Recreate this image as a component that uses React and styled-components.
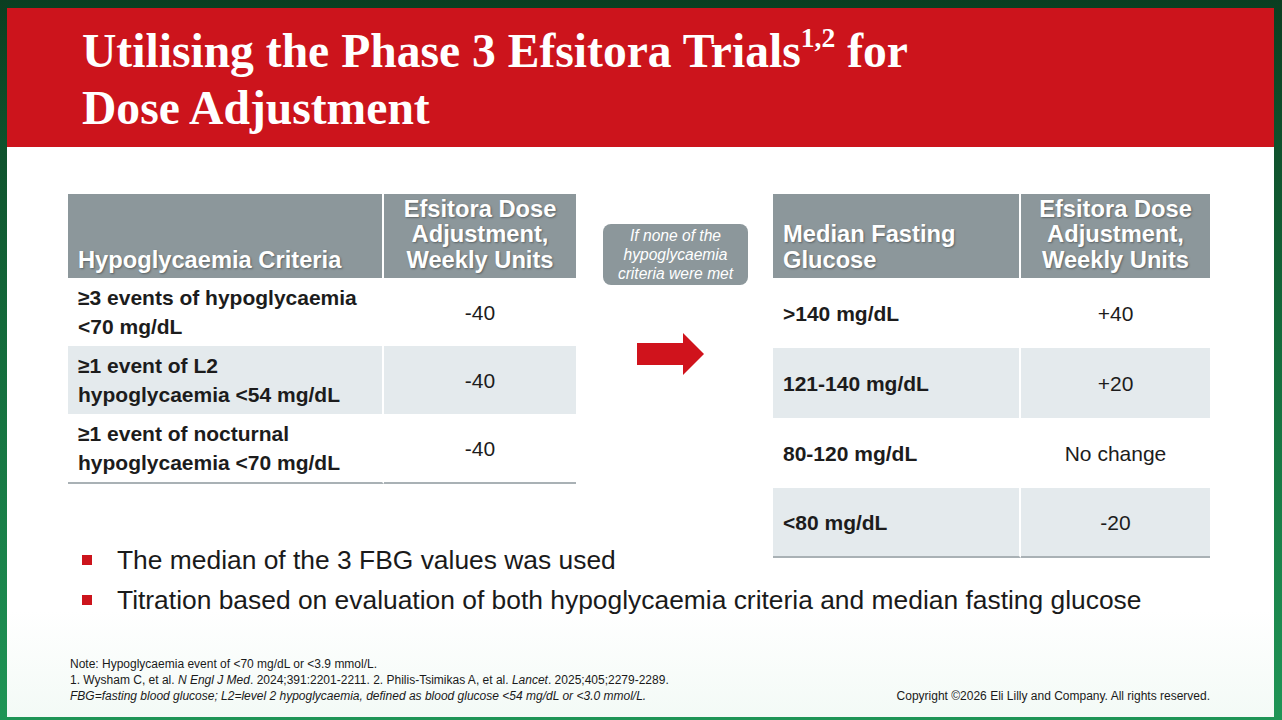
import styled, { createGlobalStyle } from 'styled-components';

const GlobalStyle = createGlobalStyle`
  html, body {
    margin: 0;
    padding: 0;
  }
  body {
    width: 1282px;
    height: 720px;
    overflow: hidden;
    background: linear-gradient(180deg, #0b3e21 0%, #13693a 45%, #1f9556 100%);
    font-family: "Liberation Sans", Arial, sans-serif;
  }
`;

const Frame = styled.div`
  display: flex;
  padding: 8px 8px 3px 7px;
  height: 720px;
  box-sizing: border-box;
`;

const Slide = styled.div`
  flex: 1;
  display: flex;
  flex-direction: column;
  background: linear-gradient(180deg, #ffffff 0%, #ffffff 85%, #f3faf6 100%);
`;

const TitleBar = styled.header`
  height: 139px;
  box-sizing: border-box;
  background: #cc141c;
  padding: 15px 0 0 75px;
`;

const Title = styled.h1`
  margin: 0;
  font-family: "Liberation Serif", "Times New Roman", serif;
  font-weight: 700;
  font-size: 47.6px;
  line-height: 57px;
  color: #ffffff;
`;

const Sup = styled.sup`
  font-size: 0.58em;
  line-height: 0;
  vertical-align: 0.72em;
`;

const Body = styled.main`
  flex: 1;
  display: flex;
  flex-direction: column;
  padding: 47px 64px 13px 61px;
`;

const TablesRow = styled.div`
  display: flex;
  align-items: flex-start;
`;

const Table = styled.table`
  width: ${(p) => p.width}px;
  table-layout: fixed;
  border-collapse: separate;
  border-spacing: 0;
  flex: none;
`;

const HeadCell = styled.th`
  height: 84px;
  box-sizing: border-box;
  padding: 0 10px 5px;
  background: #8c979b;
  color: #ffffff;
  font-size: 23.7px;
  font-weight: 700;
  line-height: 25.5px;
  text-align: ${(p) => (p.center ? 'center' : 'left')};
  vertical-align: bottom;
  text-shadow: 1px 1px 2px rgba(0, 0, 0, 0.35);
  border-right: ${(p) => (p.divider ? '2px solid #ffffff' : 'none')};
`;

const Row = styled.tr`
  background: ${(p) => (p.shade ? '#e4eaed' : '#ffffff')};
`;

const Cell = styled.td`
  height: ${(p) => p.h}px;
  box-sizing: border-box;
  padding: 0 10px;
  font-size: 21px;
  line-height: 29px;
  font-weight: ${(p) => (p.bold ? 700 : 400)};
  color: #1c1c1c;
  text-align: ${(p) => (p.center ? 'center' : 'left')};
  vertical-align: middle;
  border-right: ${(p) => (p.divider ? '2px solid #ffffff' : 'none')};
  border-bottom: ${(p) => (p.last ? '2px solid #a9b1b5' : 'none')};
`;

const Middle = styled.div`
  width: 197px;
  flex: none;
  display: flex;
  flex-direction: column;
  align-items: center;
  padding-top: 30px;
  gap: 48px;
`;

const Pill = styled.div`
  width: 145px;
  height: 61px;
  box-sizing: border-box;
  display: flex;
  align-items: center;
  justify-content: center;
  border-radius: 8px;
  background: #8c979b;
  color: #ffffff;
  font-style: italic;
  font-size: 15.6px;
  line-height: 19px;
  text-align: center;
  margin-left: 2px;
`;

const Arrow = styled.svg`
  display: block;
  margin-right: 8px;
`;

const Bullets = styled.ul`
  list-style: none;
  margin: -18px 0 0 14px;
  padding: 0;
`;

const Bullet = styled.li`
  display: flex;
  align-items: center;
  gap: 25px;
  font-size: 26.4px;
  line-height: 40px;
  color: #1a1a1a;

  &::before {
    content: '';
    width: 10px;
    height: 10px;
    flex: none;
    background: #cc141c;
  }
`;

const Footer = styled.footer`
  margin-top: auto;
  display: flex;
  align-items: flex-end;
  justify-content: space-between;
  font-size: 12px;
  line-height: 16px;
  color: #1a1a1a;
`;

const Notes = styled.div`
  margin-left: 2px;
`;

const NoteLine = styled.div`
  font-style: ${(p) => (p.italic ? 'italic' : 'normal')};
`;

const Copyright = styled.div``;

const hypoRows = [
  ['≥3 events of hypoglycaemia', '<70 mg/dL', '-40'],
  ['≥1 event of L2', 'hypoglycaemia <54 mg/dL', '-40'],
  ['≥1 event of nocturnal', 'hypoglycaemia <70 mg/dL', '-40'],
];

const fbgRows = [
  ['>140 mg/dL', '+40'],
  ['121-140 mg/dL', '+20'],
  ['80-120 mg/dL', 'No change'],
  ['<80 mg/dL', '-20'],
];

function DoseHead() {
  return (
    <HeadCell center>
      Efsitora Dose
      <br />
      Adjustment,
      <br />
      Weekly Units
    </HeadCell>
  );
}

export default function App() {
  return (
    <>
      <GlobalStyle />
      <Frame>
        <Slide>
          <TitleBar>
            <Title>
              Utilising the Phase 3 Efsitora Trials<Sup>1,2</Sup> for
              <br />
              Dose Adjustment
            </Title>
          </TitleBar>
          <Body>
            <TablesRow>
              <Table width={508}>
                <colgroup>
                  <col style={{ width: 316 }} />
                  <col style={{ width: 192 }} />
                </colgroup>
                <thead>
                  <tr>
                    <HeadCell divider>Hypoglycaemia Criteria</HeadCell>
                    <DoseHead />
                  </tr>
                </thead>
                <tbody>
                  {hypoRows.map(([a, b, v], i) => {
                    const last = i === hypoRows.length - 1;
                    return (
                      <Row key={a} shade={i % 2 === 1}>
                        <Cell h={last ? 70 : 68} bold divider last={last}>
                          {a}
                          <br />
                          {b}
                        </Cell>
                        <Cell h={last ? 70 : 68} center last={last}>
                          {v}
                        </Cell>
                      </Row>
                    );
                  })}
                </tbody>
              </Table>

              <Middle>
                <Pill>
                  If none of the
                  <br />
                  hypoglycaemia
                  <br />
                  criteria were met
                </Pill>
                <Arrow width="67" height="42" viewBox="0 0 67 42">
                  <polygon points="0,10 46,10 46,0 67,21 46,42 46,32 0,32" fill="#d0131c" />
                </Arrow>
              </Middle>

              <Table width={437}>
                <colgroup>
                  <col style={{ width: 248 }} />
                  <col style={{ width: 189 }} />
                </colgroup>
                <thead>
                  <tr>
                    <HeadCell divider>
                      Median Fasting
                      <br />
                      Glucose
                    </HeadCell>
                    <DoseHead />
                  </tr>
                </thead>
                <tbody>
                  {fbgRows.map(([a, v], i) => {
                    const last = i === fbgRows.length - 1;
                    return (
                      <Row key={a} shade={i % 2 === 1}>
                        <Cell h={70} bold divider last={last}>
                          {a}
                        </Cell>
                        <Cell h={70} center last={last}>
                          {v}
                        </Cell>
                      </Row>
                    );
                  })}
                </tbody>
              </Table>
            </TablesRow>

            <Bullets>
              <Bullet>The median of the 3 FBG values was used</Bullet>
              <Bullet>Titration based on evaluation of both hypoglycaemia criteria and median fasting glucose</Bullet>
            </Bullets>

            <Footer>
              <Notes>
                <NoteLine>Note: Hypoglycaemia event of &lt;70 mg/dL or &lt;3.9 mmol/L.</NoteLine>
                <NoteLine>
                  1. Wysham C, et al. <i>N Engl J Med</i>. 2024;391:2201-2211. 2. Philis-Tsimikas A, et al.{' '}
                  <i>Lancet</i>. 2025;405;2279-2289.
                </NoteLine>
                <NoteLine italic>
                  FBG=fasting blood glucose; L2=level 2 hypoglycaemia, defined as blood glucose &lt;54 mg/dL or
                  &lt;3.0 mmol/L.
                </NoteLine>
              </Notes>
              <Copyright>Copyright ©2026 Eli Lilly and Company. All rights reserved.</Copyright>
            </Footer>
          </Body>
        </Slide>
      </Frame>
    </>
  );
}
